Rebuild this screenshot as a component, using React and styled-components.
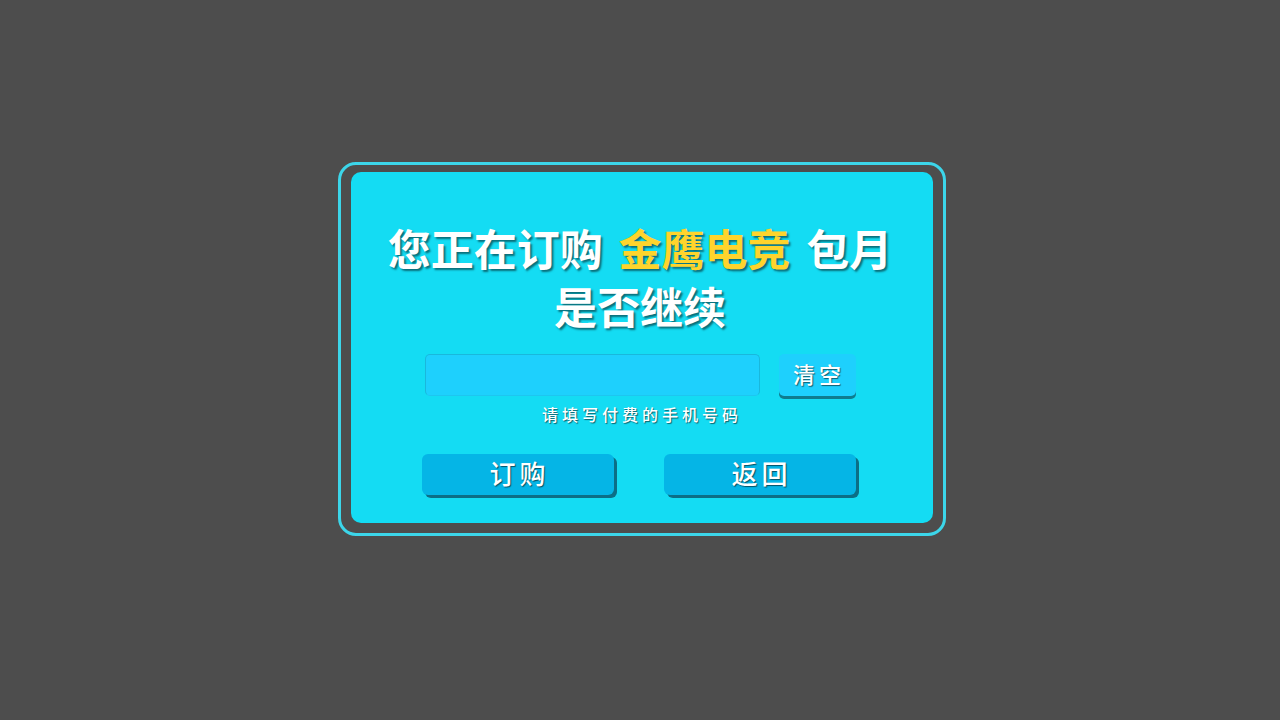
import React, { useState } from 'react'
import styled, { createGlobalStyle } from 'styled-components'

const GlobalStyle = createGlobalStyle`
  html, body {
    margin: 0;
    padding: 0;
    background: #4d4d4d;
  }
  body {
    font-family: "Noto Sans CJK SC", "Noto Sans", sans-serif;
  }
`

const Screen = styled.div`
  width: 1280px;
  height: 720px;
  display: flex;
  align-items: center;
  justify-content: center;
  padding: 0 0 22px 4px;
  box-sizing: border-box;
`

const Frame = styled.div`
  width: 608px;
  height: 374px;
  box-sizing: border-box;
  border: 3px solid #3cd6ea;
  border-radius: 18px;
  padding: 7px 10px 10px 10px;
  display: flex;
`

const Panel = styled.div`
  flex: 1;
  background: #14dcf3;
  border-radius: 10px;
  display: flex;
  flex-direction: column;
  align-items: center;
  padding: 46px 4px 0 0;
`

const Title = styled.h1`
  margin: 0;
  font-size: 43px;
  line-height: 58px;
  font-weight: 700;
  word-spacing: 6px;
  color: #ffffff;
  text-align: center;
  text-shadow: 2px 2px 2px rgba(0, 0, 0, 0.5);
  white-space: nowrap;
`

const Brand = styled.span`
  color: #ffd42c;
`

const InputRow = styled.div`
  display: flex;
  gap: 19px;
  margin-top: 20px;
  align-items: flex-start;
`

const PhoneInput = styled.input`
  width: 335px;
  height: 42px;
  box-sizing: border-box;
  background: #1ed0fd;
  border: 1px solid #19b8dc;
  border-bottom-color: #1ec6f0;
  border-radius: 5px;
  outline: none;
  font-size: 20px;
  color: #fff;
  padding: 0 10px;
`

const ClearButton = styled.button`
  width: 77px;
  height: 42px;
  border: none;
  border-radius: 5px;
  background: #1ed0fd;
  box-shadow: 0 3px 0 #0f7c8f;
  color: #fff;
  font-family: inherit;
  font-size: 22px;
  font-weight: 500;
  letter-spacing: 4px;
  padding: 0 0 4px 4px;
  text-shadow: 1px 1px 1px rgba(0, 0, 0, 0.55);
  cursor: pointer;
`

const Hint = styled.div`
  margin-top: 7px;
  font-size: 16px;
  line-height: 22px;
  font-weight: 500;
  letter-spacing: 4px;
  padding-left: 4px;
  color: #fff;
  text-shadow: 1px 1px 1px rgba(0, 0, 0, 0.55);
`

const ActionRow = styled.div`
  display: flex;
  gap: 50px;
  margin-top: 29px;
  padding-right: 3px;
`

const ActionButton = styled.button`
  width: 192px;
  height: 41px;
  border: none;
  border-radius: 6px;
  background: #05b5e6;
  box-shadow: 3px 3px 0 #0c6e86;
  color: #fff;
  font-family: inherit;
  font-size: 26px;
  font-weight: 500;
  letter-spacing: 4px;
  padding: 0 0 3px 4px;
  line-height: 38px;
  text-shadow: 1px 1px 1px rgba(0, 0, 0, 0.55);
  cursor: pointer;
`

export default function App() {
  const [phone, setPhone] = useState('')

  return (
    <>
      <GlobalStyle />
      <Screen>
        <Frame>
          <Panel>
            <Title>
              您正在订购 <Brand>金鹰电竞</Brand> 包月
              <br />
              是否继续
            </Title>
            <InputRow>
              <PhoneInput value={phone} onChange={(e) => setPhone(e.target.value)} />
              <ClearButton onClick={() => setPhone('')}>清空</ClearButton>
            </InputRow>
            <Hint>请填写付费的手机号码</Hint>
            <ActionRow>
              <ActionButton>订购</ActionButton>
              <ActionButton>返回</ActionButton>
            </ActionRow>
          </Panel>
        </Frame>
      </Screen>
    </>
  )
}
